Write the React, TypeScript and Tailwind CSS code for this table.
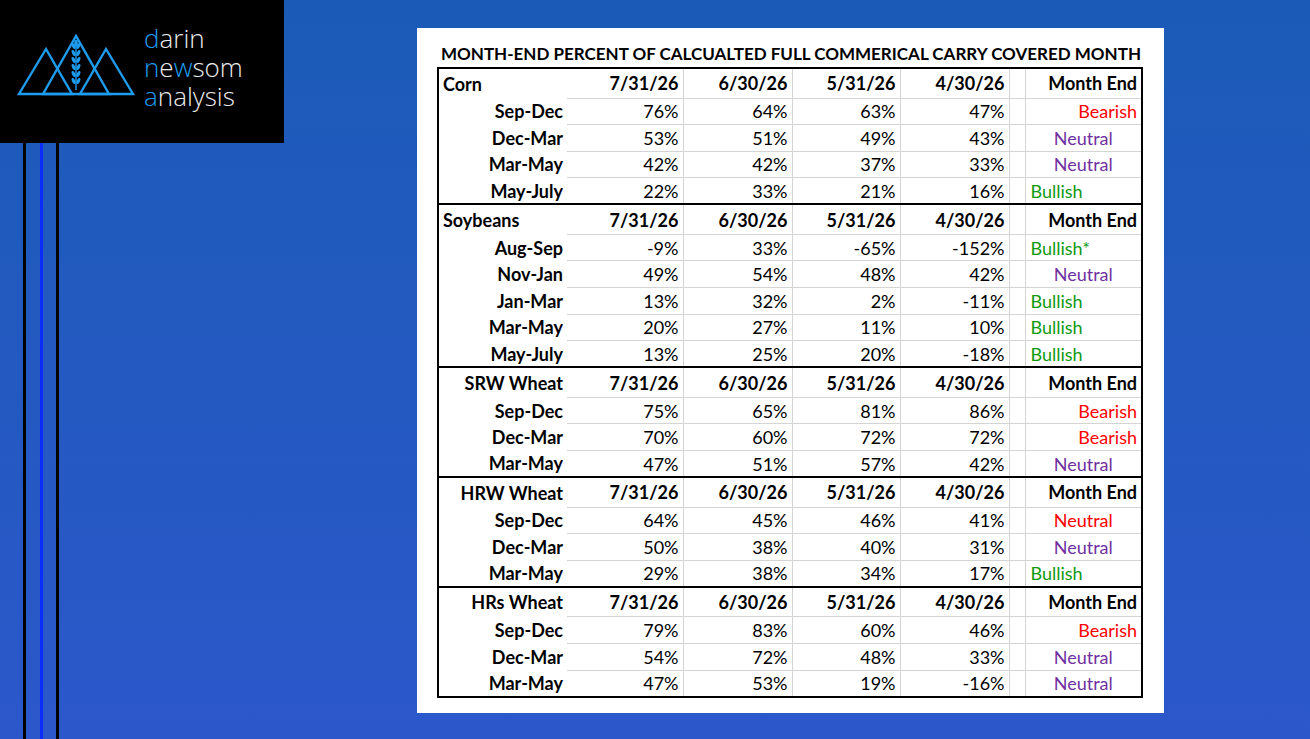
import React from "react";

type Sig = "bear" | "neu" | "neuR" | "bull";
type Row = [string, string, string, string, string, string, Sig];
type Section = { name: string; left: boolean; rows: Row[] };

const sections: Section[] = [
  {
    name: "Corn",
    left: true,
    rows: [
      ["Sep-Dec", "76%", "64%", "63%", "47%", "Bearish", "bear"],
      ["Dec-Mar", "53%", "51%", "49%", "43%", "Neutral", "neu"],
      ["Mar-May", "42%", "42%", "37%", "33%", "Neutral", "neu"],
      ["May-July", "22%", "33%", "21%", "16%", "Bullish", "bull"],
    ],
  },
  {
    name: "Soybeans",
    left: true,
    rows: [
      ["Aug-Sep", "-9%", "33%", "-65%", "-152%", "Bullish*", "bull"],
      ["Nov-Jan", "49%", "54%", "48%", "42%", "Neutral", "neu"],
      ["Jan-Mar", "13%", "32%", "2%", "-11%", "Bullish", "bull"],
      ["Mar-May", "20%", "27%", "11%", "10%", "Bullish", "bull"],
      ["May-July", "13%", "25%", "20%", "-18%", "Bullish", "bull"],
    ],
  },
  {
    name: "SRW Wheat",
    left: false,
    rows: [
      ["Sep-Dec", "75%", "65%", "81%", "86%", "Bearish", "bear"],
      ["Dec-Mar", "70%", "60%", "72%", "72%", "Bearish", "bear"],
      ["Mar-May", "47%", "51%", "57%", "42%", "Neutral", "neu"],
    ],
  },
  {
    name: "HRW Wheat",
    left: false,
    rows: [
      ["Sep-Dec", "64%", "45%", "46%", "41%", "Neutral", "neuR"],
      ["Dec-Mar", "50%", "38%", "40%", "31%", "Neutral", "neu"],
      ["Mar-May", "29%", "38%", "34%", "17%", "Bullish", "bull"],
    ],
  },
  {
    name: "HRs Wheat",
    left: false,
    rows: [
      ["Sep-Dec", "79%", "83%", "60%", "46%", "Bearish", "bear"],
      ["Dec-Mar", "54%", "72%", "48%", "33%", "Neutral", "neu"],
      ["Mar-May", "47%", "53%", "19%", "-16%", "Neutral", "neu"],
    ],
  },
];

const sigClass: Record<Sig, string> = {
  bear: "text-right pr-1 text-[#ff0000]",
  neu: "text-center text-[#7030a0]",
  neuR: "text-center text-[#ff0000]",
  bull: "text-left pl-[5px] text-[#0f9a0f]",
};

const dates = ["7/31/26", "6/30/26", "5/31/26", "4/30/26"];

function Logo() {
  const c = "#1e9cf0";
  const leaves = [46, 53, 60, 67, 74, 81];
  return (
    <svg width="140" height="143" viewBox="0 0 140 143">
      <g fill="none" stroke={c} strokeWidth="2.4" strokeLinejoin="miter">
        <polygon points="46,49 19,94 72,94" />
        <polygon points="76,36 43,94 109,94" />
        <polygon points="106,49 80,94 133,94" />
      </g>
      <line x1="76" y1="44" x2="76" y2="90" stroke={c} strokeWidth="1.4" />
      <ellipse cx="76" cy="43" rx="1.8" ry="3.2" fill={c} />
      {leaves.map((y) => (
        <g key={y}>
          <ellipse cx="73.6" cy={y} rx="1.6" ry="3.2" fill={c} transform={`rotate(-25 73.6 ${y})`} />
          <ellipse cx="78.4" cy={y} rx="1.6" ry="3.2" fill={c} transform={`rotate(25 78.4 ${y})`} />
        </g>
      ))}
    </svg>
  );
}

export default function App() {
  return (
    <div className="w-[1310px] h-[739px] overflow-hidden bg-linear-to-b from-[#1b5bb7] to-[#2b57ca] flex">
      <div className="w-[284px] flex flex-col shrink-0">
        <div className="h-[143px] bg-black flex">
          <Logo />
          <div
            className="mt-[24px] ml-[4px] text-[26px] leading-[29px] text-[#ececec] font-light"
            style={{ fontFamily: '"Open Sans", "Noto Sans", sans-serif' }}
          >
            <div>
              <span className="text-[#1e9cf0]">d</span>arin
            </div>
            <div>
              <span className="text-[#1e9cf0]">n</span>e<span className="text-[#1e9cf0]">w</span>som
            </div>
            <div>
              <span className="text-[#1e9cf0]">a</span>nalysis
            </div>
          </div>
        </div>
        <div className="flex-1 flex pl-[23px]">
          <div className="w-[3px] bg-black" />
          <div className="w-[3px] bg-[#0a2cff] ml-[14px]" />
          <div className="w-[3px] bg-black ml-[13px]" />
        </div>
      </div>
      <div className="ml-[133px] mt-[28px] w-[747px] h-[685px] bg-white pl-[20px] pt-[14px] shrink-0">
        <div
          className="pl-[4px] text-[17px] leading-[24px] font-bold text-black whitespace-nowrap"
          style={{ fontFamily: 'Lato, "Open Sans", sans-serif' }}
        >
          MONTH-END PERCENT OF CALCUALTED FULL COMMERICAL CARRY COVERED MONTH
        </div>
        <table
          className="mt-[1px] border-collapse border-2 border-black text-[18px] leading-[20px] text-black table-fixed w-[704px]"
          style={{ fontFamily: 'Lato, "Open Sans", sans-serif' }}
        >
          <colgroup>
            <col className="w-[129px]" />
            <col className="w-[116px]" />
            <col className="w-[109px]" />
            <col className="w-[108px]" />
            <col className="w-[109px]" />
            <col className="w-[16px]" />
            <col className="w-[117px]" />
          </colgroup>
          <tbody>
            {sections.map((s) => (
              <React.Fragment key={s.name}>
                <tr className="h-[30px] border-t-2 border-black font-bold">
                  <td className={s.left ? "p-0 pl-1 text-left" : "p-0 pr-1 text-right"}>{s.name}</td>
                  {dates.map((d, i) => (
                    <td
                      key={d}
                      className={
                        i === 0
                          ? "p-0 pr-1 text-right"
                          : "p-0 pr-1 text-right border-l border-[#d4d4d4]"
                      }
                    >
                      {d}
                    </td>
                  ))}
                  <td className="p-0 border-l border-[#d4d4d4]" />
                  <td className="p-0 pr-1 text-right border-l border-[#d4d4d4]">Month End</td>
                </tr>
                {s.rows.map((r, ri) => (
                  <tr key={ri} className="h-[26.6px]">
                    <td className="p-0 pr-1 text-right font-bold">{r[0]}</td>
                    <td className="p-0 pr-1 text-right border-t border-[#d4d4d4]">{r[1]}</td>
                    <td className="p-0 pr-1 text-right border-t border-l border-[#d4d4d4]">{r[2]}</td>
                    <td className="p-0 pr-1 text-right border-t border-l border-[#d4d4d4]">{r[3]}</td>
                    <td className="p-0 pr-1 text-right border-t border-l border-[#d4d4d4]">{r[4]}</td>
                    <td className="p-0 border-t border-l border-[#d4d4d4]" />
                    <td className={`p-0 border-t border-l border-[#d4d4d4] ${sigClass[r[6]]}`}>{r[5]}</td>
                  </tr>
                ))}
              </React.Fragment>
            ))}
          </tbody>
        </table>
      </div>
    </div>
  );
}
